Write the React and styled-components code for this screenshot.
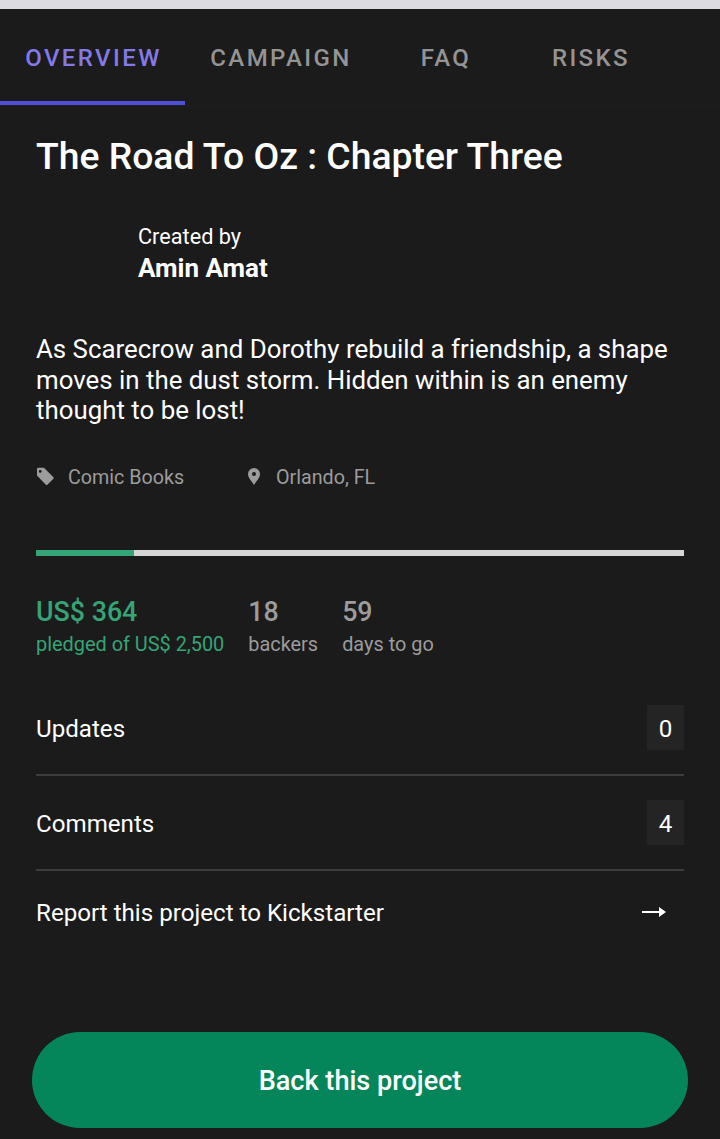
import React from 'react';
import styled, { createGlobalStyle } from 'styled-components';

const Global = createGlobalStyle`
  html, body {
    margin: 0;
    padding: 0;
    background: #1b1b1b;
  }
`;

const Page = styled.div`
  width: 720px;
  height: 1139px;
  overflow: hidden;
  display: flex;
  flex-direction: column;
  background: #1b1b1b;
  font-family: Roboto, sans-serif;
  color: #fff;
`;

const StatusEdge = styled.div`
  height: 9px;
  flex: none;
  background: #dcdce0;
`;

const Tabs = styled.nav`
  display: flex;
  height: 96px;
  flex: none;
  box-shadow: 0 1px 0 #1e1e1e;
`;

const Tab = styled.div`
  width: ${p => p.$w}px;
  box-sizing: border-box;
  display: flex;
  align-items: center;
  justify-content: center;
  padding: 6px 0 0 2px;
  font-size: 24px;
  font-weight: 500;
  letter-spacing: 2.4px;
  color: ${p => (p.$active ? '#8479ea' : '#949494')};
  border-bottom: 4px solid ${p => (p.$active ? '#4f4fdc' : 'transparent')};
`;

const Content = styled.main`
  padding: 0 36px;
  display: flex;
  flex-direction: column;
`;

const Title = styled.h1`
  margin: 29px 0 0;
  font-size: 37.3px;
  line-height: 44px;
  font-weight: 500;
`;

const Creator = styled.div`
  margin: 45px 0 0 102px;
`;

const CreatedBy = styled.div`
  font-size: 21.7px;
  line-height: 28px;
`;

const CreatorName = styled.div`
  margin-top: 1px;
  font-size: 26px;
  line-height: 32px;
  font-weight: 700;
`;

const Blurb = styled.p`
  margin: 50px 0 0;
  font-size: 25.85px;
  line-height: 30.5px;
`;

const Meta = styled.div`
  display: flex;
  margin-top: 38px;
  font-size: 19.7px;
  line-height: 28px;
  color: #9c9c9c;
`;

const MetaItem = styled.div`
  display: flex;
  align-items: center;
  width: ${p => p.$w}px;
  gap: ${p => p.$gap}px;
`;

const MetaIcon = styled.svg`
  margin-bottom: 3px;
  fill: #9c9c9c;
`;

const Progress = styled.div`
  height: 6px;
  margin-top: 58px;
  background: #d6d6d6;
`;

const ProgressFill = styled.div`
  height: 100%;
  background: #36a476;
`;

const Stats = styled.div`
  display: flex;
  gap: 24px;
  margin-top: 40px;
`;

const Stat = styled.div`
  color: ${p => (p.$funded ? '#36a476' : '#9c9c9c')};
`;

const StatValue = styled.div`
  font-size: 26.8px;
  line-height: 32px;
  font-weight: 500;
`;

const StatLabel = styled.div`
  margin-top: 4px;
  font-size: 19.9px;
  line-height: 26px;
`;

const Row = styled.div`
  display: flex;
  align-items: center;
  justify-content: space-between;
  height: 95px;
  box-sizing: border-box;
  font-size: 24.15px;
  border-bottom: 2px solid #3d3d3d;
`;

const FirstRow = styled(Row)`
  margin-top: 23px;
`;

const RowLabel = styled.span`
  padding-top: 4px;
`;

const Count = styled.div`
  width: 37px;
  height: 45px;
  padding-top: 4px;
  box-sizing: border-box;
  display: flex;
  align-items: center;
  justify-content: center;
  background: #242424;
`;

const ReportRow = styled(Row)`
  border-bottom: none;
  height: 84px;
  padding-right: 18px;
`;

const Arrow = styled.svg`
  margin-bottom: 2px;
  fill: #fff;
`;

const CtaWrap = styled.div`
  display: flex;
  justify-content: center;
  margin-top: auto;
  padding-bottom: 11px;
`;

const BackButton = styled.button`
  width: 656px;
  height: 96px;
  padding: 2px 0 0;
  border: none;
  border-radius: 48px;
  background: #04865a;
  color: #fff;
  font-family: Roboto, sans-serif;
  font-size: 27.1px;
  font-weight: 500;
`;

const TagIcon = () => (
  <MetaIcon width="18" height="18" viewBox="0 0 18 18">
    <path d="M1 2.2 A1.4 1.4 0 0 1 2.4 .8 H8 L17.2 10 A1.4 1.4 0 0 1 17.2 12 L11.6 17.4 A1.4 1.4 0 0 1 9.6 17.4 L1 8.6 Z M4.2 3 A1.4 1.4 0 1 0 4.2 5.8 A1.4 1.4 0 1 0 4.2 3 Z" fillRule="evenodd" />
  </MetaIcon>
);

const PinIcon = () => (
  <MetaIcon width="12" height="17" viewBox="0 0 12 17">
    <path d="M6 0 A6 6 0 0 0 0 6 C0 10 4 13.5 6 17 C8 13.5 12 10 12 6 A6 6 0 0 0 6 0 Z M6 4 A2 2 0 1 1 6 8 A2 2 0 1 1 6 4 Z" fillRule="evenodd" />
  </MetaIcon>
);

const ArrowIcon = () => (
  <Arrow width="24" height="10" viewBox="0 0 24 10">
    <path d="M0 4 H17 V0 L24 5 L17 10 V6 H0 Z" />
  </Arrow>
);

const App = () => (
  <Page>
    <Global />
    <StatusEdge />
    <Tabs>
      <Tab $w={185} $active>OVERVIEW</Tab>
      <Tab $w={190}>CAMPAIGN</Tab>
      <Tab $w={140}>FAQ</Tab>
      <Tab $w={150}>RISKS</Tab>
    </Tabs>
    <Content>
      <Title>The Road To Oz : Chapter Three</Title>
      <Creator>
        <CreatedBy>Created by</CreatedBy>
        <CreatorName>Amin Amat</CreatorName>
      </Creator>
      <Blurb>
        As Scarecrow and Dorothy rebuild a friendship, a shape moves in the dust storm. Hidden within is an enemy thought to be lost!
      </Blurb>
      <Meta>
        <MetaItem $w={212} $gap={14}><TagIcon />Comic Books</MetaItem>
        <MetaItem $w={200} $gap={16}><PinIcon />Orlando, FL</MetaItem>
      </Meta>
      <Progress>
        <ProgressFill style={{ width: `${(364 / 2500) * 100 + 0.6}%` }} />
      </Progress>
      <Stats>
        <Stat $funded>
          <StatValue>US$ 364</StatValue>
          <StatLabel>pledged of US$ 2,500</StatLabel>
        </Stat>
        <Stat>
          <StatValue>18</StatValue>
          <StatLabel>backers</StatLabel>
        </Stat>
        <Stat>
          <StatValue>59</StatValue>
          <StatLabel>days to go</StatLabel>
        </Stat>
      </Stats>
      <FirstRow><RowLabel>Updates</RowLabel><Count>0</Count></FirstRow>
      <Row><RowLabel>Comments</RowLabel><Count>4</Count></Row>
      <ReportRow>Report this project to Kickstarter<ArrowIcon /></ReportRow>
    </Content>
    <CtaWrap>
      <BackButton>Back this project</BackButton>
    </CtaWrap>
  </Page>
);

export default App;
